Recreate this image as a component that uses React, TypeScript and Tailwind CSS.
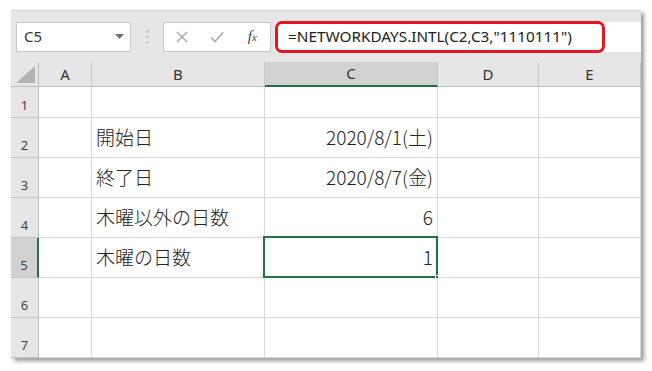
import { Fragment } from 'react';

const cols = [
  { key: 'A', w: 'w-[53px]' },
  { key: 'B', w: 'w-[173px]' },
  { key: 'C', w: 'w-[173px]' },
  { key: 'D', w: 'w-[101px]' },
  { key: 'E', w: 'w-[102px]' },
];

const rows: { n: number; h: string; b?: string; c?: string }[] = [
  { n: 1, h: 'h-[31px]' },
  { n: 2, h: 'h-[40px]', b: '開始日', c: '2020/8/1(土)' },
  { n: 3, h: 'h-[40px]', b: '終了日', c: '2020/8/7(金)' },
  { n: 4, h: 'h-[40px]', b: '木曜以外の日数', c: '6' },
  { n: 5, h: 'h-[40px]', b: '木曜の日数', c: '1' },
  { n: 6, h: 'h-[40px]' },
  { n: 7, h: 'h-[40px]' },
];

const uiFont = "font-['Noto_Sans','Open_Sans',sans-serif]";
const cellFont = "font-['Noto_Sans_CJK_JP',sans-serif]";

export default function App() {
  return (
    <div className="w-[652px] h-[371px] bg-white pt-[10px] pl-[11px]">
      <div className="w-[630px] bg-[#e6e6e6] shadow-[3px_3px_4px_rgba(0,0,0,0.4)]">
        {/* formula bar */}
        <div className="h-[52px] flex items-center pl-[5px] border-t border-[#d4d4d4]">
          <div className={`w-[115px] h-[30px] bg-white border border-[#c6c6c6] flex items-center justify-between pl-[7px] pr-[6px] text-[15px] text-[#333] ${uiFont}`}>
            <span>C5</span>
            <svg width="9" height="5" viewBox="0 0 9 5"><path d="M0 0h9L4.5 5z" fill="#707070" /></svg>
          </div>
          <div className="w-[32px] flex justify-center">
            <svg width="3" height="14" viewBox="0 0 3 14">
              <circle cx="1.5" cy="1.5" r="1.1" fill="#b0b0b0" />
              <circle cx="1.5" cy="7" r="1.1" fill="#b0b0b0" />
              <circle cx="1.5" cy="12.5" r="1.1" fill="#b0b0b0" />
            </svg>
          </div>
          <div className="w-[108px] h-[30px] bg-white border border-[#c6c6c6] flex items-center">
            <div className="w-[36px] flex justify-center">
              <svg width="12" height="12" viewBox="0 0 12 12"><path d="M1 1l10 10M11 1L1 11" stroke="#a8a8a8" strokeWidth="1.4" /></svg>
            </div>
            <div className="w-[36px] flex justify-center">
              <svg width="14" height="12" viewBox="0 0 14 12"><path d="M1 6.5l4 4L13 1.5" stroke="#a8a8a8" strokeWidth="1.6" fill="none" /></svg>
            </div>
            <div className="w-[36px] flex justify-center">
              <span className="font-['Liberation_Serif',serif] italic text-[15px] text-[#444] leading-none">
                f<span className="text-[11px]">x</span>
              </span>
            </div>
          </div>
          <div className="flex-1 h-[30px] ml-[4px] bg-white flex items-center">
            <div className={`w-[330px] h-[32px] border-[3px] border-[#e5141e] rounded-[7px] flex items-center pl-[10px] text-[15.3px] text-[#222] ${uiFont}`}>
              =NETWORKDAYS.INTL(C2,C3,"1110111")
            </div>
          </div>
        </div>

        {/* column headers */}
        <div className={`flex h-[25px] bg-[#e6e6e6] text-[15px] text-[#333] ${uiFont}`}>
          <div className="w-[28px] border-r border-b border-[#bcbcbc] flex items-end justify-end pr-[3px] pb-[3px]">
            <svg width="19" height="17" viewBox="0 0 19 17"><path d="M19 0V17H0z" fill="#b4b4b4" /></svg>
          </div>
          {cols.map((c) => (
            <div
              key={c.key}
              className={`${c.w} border-r border-[#c6c6c6] flex items-center justify-center ${
                c.key === 'C' ? 'bg-[#d2d2d2] border-b-2 border-b-[#217346]' : 'border-b border-b-[#bcbcbc]'
              }`}
            >
              {c.key}
            </div>
          ))}
        </div>

        {/* rows */}
        {rows.map((r) => (
          <div key={r.n} className={`flex ${r.h}`}>
            <div
              className={`w-[28px] border-b border-[#c6c6c6] flex items-end justify-center pb-[2px] text-[13px] text-[#444] ${uiFont} ${
                r.n === 5 ? 'bg-[#d2d2d2] border-r-2 border-r-[#217346]' : 'bg-[#e6e6e6] border-r border-r-[#bcbcbc]'
              }`}
            >
              {r.n}
            </div>
            {cols.map((c) => (
              <Fragment key={c.key}>
                <div
                  className={`${c.w} relative bg-white border-r border-b border-[#d9d9d9] flex items-center text-[19px] font-light text-[#222] ${cellFont} ${
                    c.key === 'C' ? 'justify-end pr-[4px]' : 'pl-[4px]'
                  }`}
                >
                  {c.key === 'B' && r.b}
                  {c.key === 'C' && r.c}
                  {c.key === 'C' && r.n === 5 && (
                    <>
                      <div className="absolute -left-[2px] -top-[2px] -right-[1px] -bottom-[1px] border-2 border-[#217346]" />
                      <div className="absolute -right-[4px] -bottom-[4px] w-[6px] h-[6px] bg-[#217346] border border-white" />
                    </>
                  )}
                </div>
              </Fragment>
            ))}
          </div>
        ))}
      </div>
    </div>
  );
}
